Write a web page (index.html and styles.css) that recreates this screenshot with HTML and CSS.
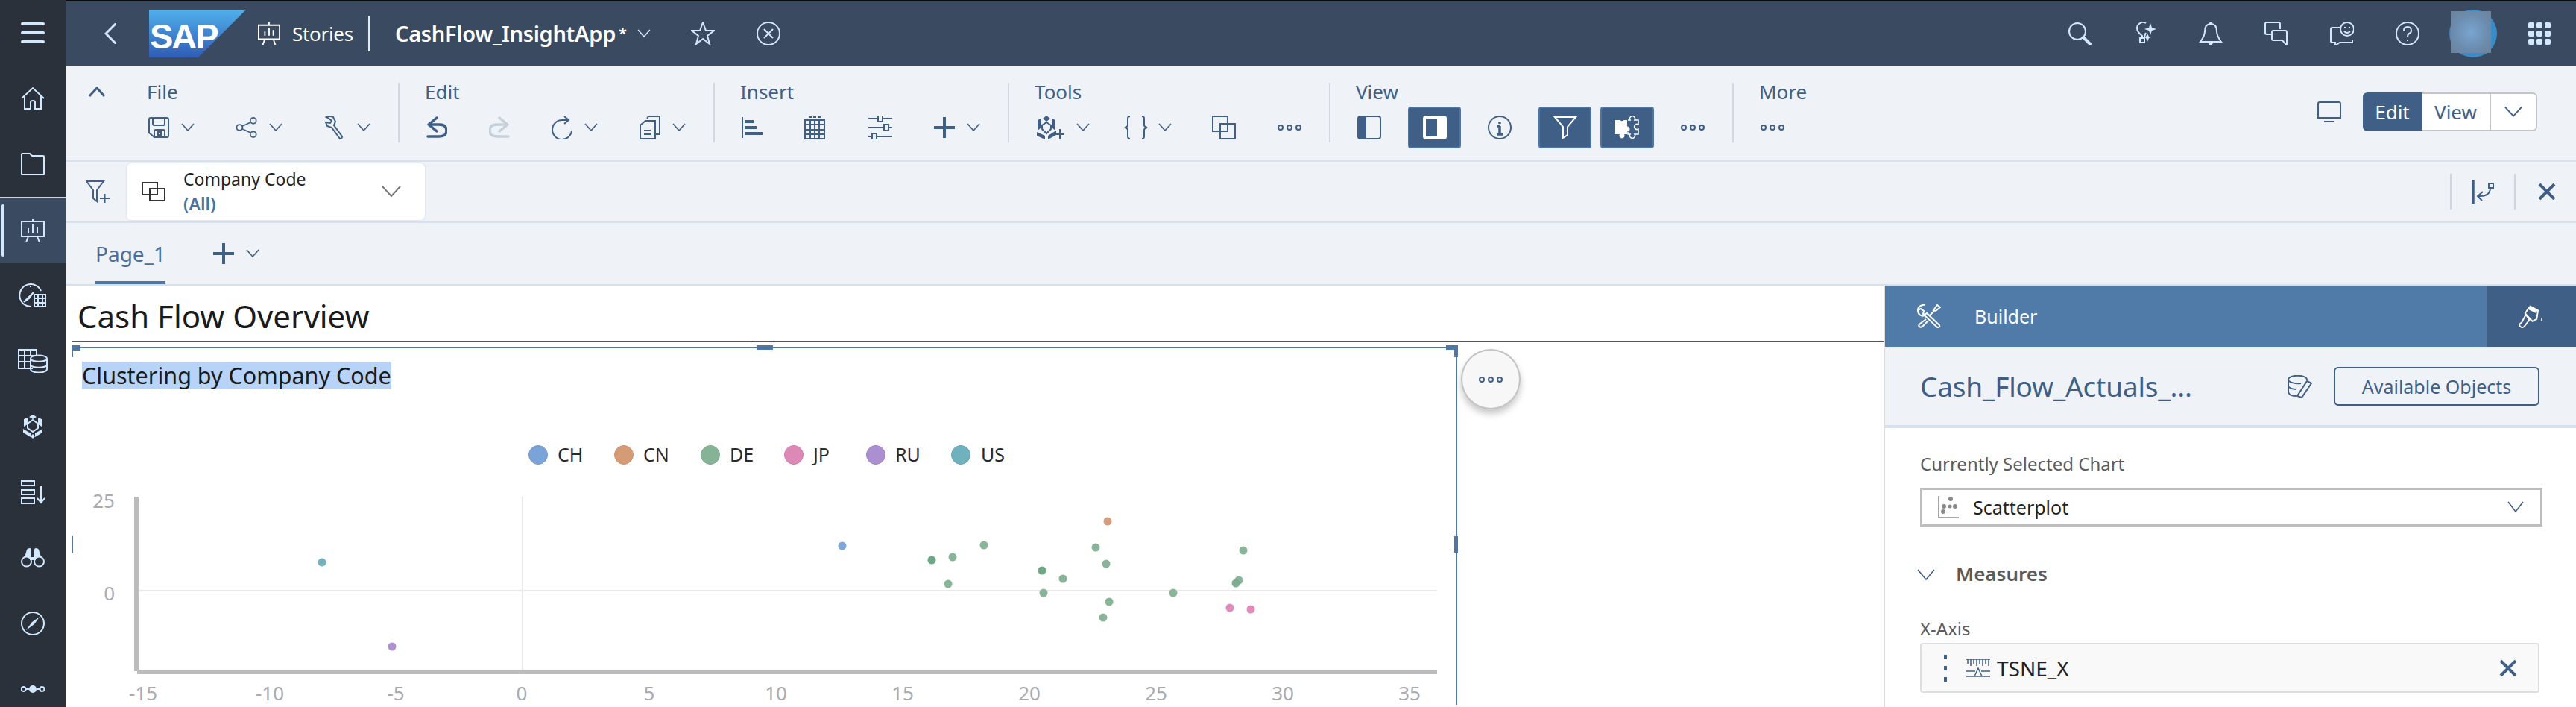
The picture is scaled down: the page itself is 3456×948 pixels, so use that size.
FILE: index.html
```html
<!DOCTYPE html>
<html lang="en">
<head>
<meta charset="utf-8">
<title>CashFlow_InsightApp</title>
<link rel="stylesheet" href="styles.css">
</head>
<body>
<div class="app">

	<nav class="sidebar">
		<div class="side-item"><svg class="ic32" viewBox="0 0 32 32"><path class="fat" d="M2 4H30M2 16H30M2 28H30"/></svg></div>
		<div class="side-item"><svg class="ic32" viewBox="0 0 32 32"><path d="M1 16L16 2L31 16M5 13V30H13V21Q13 19 16 19Q19 19 19 21V30H27V13"/></svg></div>
		<div class="side-item"><svg class="ic32" viewBox="0 0 32 32"><path d="M1 3Q1 2 2 2H12L15 5H30Q31 5 31 6V29Q31 30 30 30H2Q1 30 1 29Z"/></svg></div>
		<div class="side-item active"><svg class="ic32" viewBox="0 0 32 32"><path d="M1 4H31V24H1ZM16 0V4M10 24L7 32M22 24L25 32M10 19V13M16 19V8M22 19V11"/></svg></div>
		<div class="side-item"><svg class="ic36" viewBox="0 0 36 32"><path d="M16 31A15 15 0 1 1 29 10M6 25L19 12L13 20ZM15 3V5"/><path d="M20 15H36V31H20ZM20 20H36M20 26H36M25 15V31M31 15V31"/></svg></div>
		<div class="side-item"><svg class="ic40" viewBox="0 0 40 32"><path d="M20 26H1V1H25V10M1 9H25M1 17H17M9 1V26M17 1V10"/><path d="M17 13C17 7 39 7 39 13V27C39 33 17 33 17 27ZM17 13C17 18 39 18 39 13M17 21C17 26 39 26 39 21"/></svg></div>
		<div class="side-item"><svg class="ic32" viewBox="0 0 32 32"><path class="solid" d="M16 0L21 3L16 6L11 3ZM4 6L9 4V13L4 16ZM28 6L23 4V13L28 16ZM3 19L13 25V30L3 24ZM29 19L19 25V30L29 24ZM16 26L13 29L16 32L19 29Z"/><path d="M16 7L23 12V18L16 23L9 18V12Z"/></svg></div>
		<div class="side-item"><svg class="ic32" viewBox="0 0 32 32"><path d="M1 1H18V7H1ZM1 13H18V19H1ZM1 24H18V31H1ZM27 8V29M22 24L27 30L32 24"/></svg></div>
		<div class="side-item"><svg class="ic32" viewBox="0 0 32 26"><path class="solid" d="M5 12L8 2Q9 0 12 0Q14 0 14 3V12ZM27 12L24 2Q23 0 20 0Q18 0 18 3V12ZM12 12H20V16H12Z"/><circle cx="7.5" cy="18" r="6.5"/><circle cx="24.5" cy="18" r="6.5"/></svg></div>
		<div class="side-item"><svg class="ic32" viewBox="0 0 32 32"><circle cx="16" cy="16" r="15"/><path class="solid" d="M7 25L15 14L25 7L18 17ZM16 2V6"/></svg></div>
		<div class="side-item"><svg class="ic32" viewBox="0 0 32 12"><circle cx="3.5" cy="6" r="3"/><circle cx="28.5" cy="6" r="3"/><circle class="solid" cx="16" cy="6" r="5"/><path d="M7 6H11M21 6H25"/></svg></div>
	</nav>

	<div class="main">
		<header class="shell">
			<svg class="back" viewBox="0 0 16 28"><path d="M15 1L2 14L15 27"/></svg>
			<svg class="sap" viewBox="0 0 130 64">
				<defs><linearGradient id="sapg" x1="0" y1="0" x2="0" y2="1"><stop offset="0" stop-color="#4fb0ec"/><stop offset="1" stop-color="#2f5cb5"/></linearGradient></defs>
				<polygon points="0,0 130,0 66,64 0,64" fill="url(#sapg)"/>
				<text x="1" y="52" class="sap-text">SAP</text>
			</svg>
			<svg class="stories-ic" viewBox="0 0 32 32"><path d="M1 4H31V24H1ZM16 0V4M10 24L7 32M22 24L25 32M10 19V13M16 19V8M22 19V11"/></svg>
			<span class="crumb">Stories</span>
			<span class="crumb-sep"></span>
			<span class="doc">CashFlow_InsightApp</span><span class="dirty">*</span>
			<svg class="chev light doc-chev" viewBox="0 0 18 12"><path d="M1 1L9 10L17 1"/></svg>
			<svg class="ic32 shell-l" viewBox="0 0 32 32"><path d="M16 1L20 12H31L22 19L25 30L16 23L7 30L10 19L1 12H12Z"/></svg>
			<svg class="ic32 shell-l" viewBox="0 0 32 32"><circle cx="16" cy="16" r="15"/><path d="M10 10L22 22M22 10L10 22"/></svg>

			<div class="shell-right">
				<svg class="ic32" viewBox="0 0 32 32"><circle cx="13" cy="13" r="11"/><path class="fat" d="M21 21L30 30"/></svg>
				<svg class="ic32" viewBox="0 0 32 32"><path d="M12 22V19C8 16 5 13 5 9A8 8 0 0 1 17 2M17 15C16 17 15 18 15 22H9V28H15V22"/><path class="solid" d="M23 2L25 8L31 10L25 12L23 18L21 12L15 10L21 8ZM19 16L21 20L24 21L21 22L19 27L17 22L14 21L17 20Z"/></svg>
				<svg class="ic32" viewBox="0 0 32 32"><path d="M16 3C9 3 8 9 8 13C8 19 5 23 2 27H30C27 23 24 19 24 13C24 9 23 3 16 3ZM14 3Q16 0 18 3"/><path class="solid" d="M13 28H19Q18 32 16 32Q14 32 13 28Z"/></svg>
				<svg class="ic32" viewBox="0 0 32 32"><path d="M21 10V3Q21 1 19 1H3Q1 1 1 3V15Q1 17 3 17H10"/><path d="M12 12Q10 12 10 14V23Q10 25 12 25H24L30 32V14Q30 12 28 12Z"/></svg>
				<svg class="ic32" viewBox="0 0 32 32"><path d="M13 8H3Q1 8 1 10V26Q1 28 3 28H7V32L13 28H30V24"/><circle cx="23" cy="10" r="9"/><path d="M19 13Q23 17 27 13M20 7V9M26 7V9"/></svg>
				<svg class="ic32" viewBox="0 0 32 32"><circle cx="16" cy="16" r="15"/><path d="M11 12Q11 7 16 7Q21 7 21 12Q21 15 18 16Q16 17 16 21M16 24V26"/></svg>
				<div class="avatar"><div class="avatar-blur"></div></div>
				<div class="waffle"><i></i><i></i><i></i><i></i><i></i><i></i><i></i><i></i><i></i></div>
			</div>
		</header>

		<section class="ribbon">
			<svg class="collapse" viewBox="0 0 22 14"><path d="M1 13L11 2L21 13"/></svg>

			<div class="group">
				<div class="group-label">File</div>
				<div class="group-row">
					<div class="tool"><svg class="ic28" viewBox="0 0 28 28"><path d="M1 3Q1 1 3 1H25Q27 1 27 3V25Q27 27 25 27H8L1 21ZM6 1V9Q6 11 8 11H20Q22 11 22 9V1M8 27V19Q8 17 10 17H20Q22 17 22 19V27M13 20V24H17V20Z"/></svg><svg class="chev" viewBox="0 0 18 12"><path d="M1 1L9 10L17 1"/></svg></div>
					<div class="tool"><svg class="ic28" viewBox="0 0 32 32"><circle cx="5" cy="16" r="4.5"/><circle cx="26" cy="5.5" r="4.5"/><circle cx="26" cy="26.500" r="4.5"/><path d="M9 14L22 8M9 18L22 24"/></svg><svg class="chev" viewBox="0 0 18 12"><path d="M1 1L9 10L17 1"/></svg></div>
					<div class="tool"><svg class="ic28" viewBox="0 0 28 32"><path d="M3 2Q8 0 12 2L15 8L13 13L24 28Q24 31 21 31L10 16L4 14L2 9L8 10L10 7L5 3Z"/></svg><svg class="chev" viewBox="0 0 18 12"><path d="M1 1L9 10L17 1"/></svg></div>
				</div>
			</div>
			<span class="rib-sep"></span>

			<div class="group">
				<div class="group-label">Edit</div>
				<div class="group-row">
					<div class="tool"><svg class="ic28 undo" viewBox="0 0 28 28"><path d="M14 1L3 10L14 19M4 10H17Q27 10 27 18Q27 26 17 26H2"/></svg></div>
					<div class="tool disabled"><svg class="ic28 undo" viewBox="0 0 28 28"><path d="M14 1L25 10L14 19M24 10H11Q1 10 1 18Q1 26 11 26H26"/></svg></div>
					<div class="tool"><svg class="ic28" viewBox="0 0 28 32"><path d="M17 1L23 6L17 11M23 6H14A13 13 0 1 0 27 20"/></svg><svg class="chev" viewBox="0 0 18 12"><path d="M1 1L9 10L17 1"/></svg></div>
					<div class="tool"><svg class="ic28" viewBox="0 0 28 32"><path d="M10 4L12 1H27V25H22M1 13L8 7H21V31H1ZM6 20H15M6 25H15"/></svg><svg class="chev" viewBox="0 0 18 12"><path d="M1 1L9 10L17 1"/></svg></div>
				</div>
			</div>
			<span class="rib-sep"></span>

			<div class="group">
				<div class="group-label">Insert</div>
				<div class="group-row insert-row">
					<div class="tool"><svg class="ic28" viewBox="0 0 28 28"><path d="M1 0V28"/><path class="solid" d="M4 4H16V8H4ZM4 12H20V16H4ZM4 20H28V24H4Z"/></svg></div>
					<div class="tool"><svg class="ic28" viewBox="0 0 28 32"><path d="M1 6H27V31H1ZM1 12H27M1 19H27M1 25H27M8 6V31M14 6V31M20 6V31M6 2H10M12 2H16M18 2H22"/></svg></div>
					<div class="tool"><svg class="ic32" viewBox="0 0 32 32"><path d="M0 4H12M20 4H32M0 16H20M28 16H32M0 28H4M12 28H32"/><path d="M13 0H19V8H13ZM21 12H27V20H21ZM5 24H11V32H5Z"/></svg></div>
					<div class="tool"><svg class="ic28 thick" viewBox="0 0 28 28"><path d="M0 14H28M14 0V28"/></svg><svg class="chev" viewBox="0 0 18 12"><path d="M1 1L9 10L17 1"/></svg></div>
				</div>
			</div>
			<span class="rib-sep"></span>

			<div class="group">
				<div class="group-label">Tools</div>
				<div class="group-row">
					<div class="tool"><svg class="ic38" viewBox="0 0 38 32"><path class="solid" d="M14 0L19 4L14 8L9 4ZM2 6L7 4V16L2 20ZM26 6L21 4V16L26 20ZM1 22L12 27V32L1 27ZM27 20V26L16 32V27Z"/><path d="M14 9L20 13V18L14 24L8 18V13ZM32 18V32M25 25H38"/></svg><svg class="chev" viewBox="0 0 18 12"><path d="M1 1L9 10L17 1"/></svg></div>
					<div class="tool braces"><svg class="ic32" viewBox="0 0 32 32"><path d="M8 1Q5 1 5 4V13Q5 15 1 16Q5 17 5 19V28Q5 31 8 31M24 1Q27 1 27 4V13Q27 15 31 16Q27 17 27 19V28Q27 31 24 31"/></svg><svg class="chev short" viewBox="0 0 18 12"><path d="M1 1L9 10L17 1"/></svg></div>
					<div class="tool"><svg class="ic32" viewBox="0 0 32 32"><path d="M1 1H21V21H1ZM11 11H31V31H11Z"/></svg></div>
					<div class="tool"><svg class="ic32" viewBox="0 0 32 10"><circle cx="4" cy="5" r="3"/><circle cx="16" cy="5" r="3"/><circle cx="28" cy="5" r="3"/></svg></div>
				</div>
			</div>
			<span class="rib-sep"></span>

			<div class="group">
				<div class="group-label">View</div>
				<div class="group-row view-row">
					<svg class="ic32" viewBox="0 0 32 32"><rect x="1" y="1" width="30" height="30" rx="3"/><path class="solid" d="M3 1H12V31H3Q1 31 1 29V3Q1 1 3 1Z"/></svg>
					<div class="toggle"><svg class="ic32" viewBox="0 0 32 32"><rect class="w-solid" x="1" y="1" width="30" height="30" rx="3"/><rect class="b-solid" x="4" y="4" width="15" height="24"/></svg></div>
					<svg class="ic32" viewBox="0 0 32 32"><circle cx="16" cy="16" r="15"/><path class="thickp" d="M16 14V25M16 8V11M12 25H20M12 14H16"/></svg>
					<div class="toggle"><svg class="ic32 white" viewBox="0 0 32 32"><path d="M2 2H30L19 15V26L13 30V15Z"/></svg></div>
					<div class="toggle tight"><svg class="ic32 white" viewBox="0 0 32 32"><path class="w-fill" d="M0 6H6.500A3 3 0 0 0 11.500 6H16V14.500A3.500 3.500 0 1 1 16 21.500V25H12A3.500 3.500 0 1 1 6 25H0Z"/><path class="w-line" d="M17 6H20A3.500 3.500 0 1 1 26 6H31V12A3.500 3.500 0 1 0 31 18V25H26A3.500 3.500 0 1 1 20 25H17V22"/></svg></div>
					<svg class="ic32" viewBox="0 0 32 10"><circle cx="4" cy="5" r="3"/><circle cx="16" cy="5" r="3"/><circle cx="28" cy="5" r="3"/></svg>
				</div>
			</div>
			<span class="rib-sep"></span>

			<div class="group">
				<div class="group-label">More</div>
				<div class="group-row">
					<div class="tool"><svg class="ic32" viewBox="0 0 32 10"><circle cx="4" cy="5" r="3"/><circle cx="16" cy="5" r="3"/><circle cx="28" cy="5" r="3"/></svg></div>
				</div>
			</div>

			<div class="mode">
				<svg class="ic32" viewBox="0 0 32 28"><path d="M3 1H29Q31 1 31 3V22H1V3Q1 1 3 1ZM9 27H23"/></svg>
				<div class="mode-group">
					<span class="mode-btn on">Edit</span>
					<span class="mode-btn view">View</span>
					<span class="mode-btn drop"><svg class="chev wide" viewBox="0 0 26 16"><path d="M1 1L13 14L25 1"/></svg></span>
				</div>
			</div>
		</section>

		<section class="filterbar">
			<svg class="funnel" viewBox="0 0 32 30"><path d="M1 1H24L15 13V28L10 24V13ZM19 24H32M25.500 18V30"/></svg>
			<div class="filter-card">
				<svg class="linked" viewBox="0 0 32 26"><path d="M1 1H21V17H1ZM11 9H31V25H11Z"/></svg>
				<div class="filter-text">
					<div class="filter-name">Company Code</div>
					<div class="filter-value">(All)</div>
				</div>
				<svg class="chev grey" viewBox="0 0 26 16"><path d="M1 1L13 14L25 1"/></svg>
			</div>
			<div class="filter-tools">
				<span class="filter-tool"><svg class="ic32" viewBox="0 0 32 32"><path class="thickp" d="M3 0V32"/><path d="M24 5V11H30V5ZM26 13Q24 23 10 22M16 16L9 22L15 28"/></svg></span>
				<span class="filter-tool"><svg class="x-ic" viewBox="0 0 24 22"><path d="M2 1L22 21M22 1L2 21"/></svg></span>
			</div>
		</section>

		<section class="tabs">
			<div class="tab">Page_1</div>
			<svg class="ic28 thick tab-plus" viewBox="0 0 28 28"><path d="M0 14H28M14 0V28"/></svg>
			<svg class="chev" viewBox="0 0 18 12"><path d="M1 1L9 10L17 1"/></svg>
		</section>

		<div class="workspace">
			<section class="canvas">
				<h1 class="page-title">Cash Flow Overview</h1>
				<div class="widget">
					<span class="handle h-corner-l"></span>
					<span class="handle h-top"></span>
					<span class="handle h-corner-r"></span>
					<span class="handle h-left"></span>
					<span class="handle h-right"></span>
					<div class="widget-more"><svg class="more-ic" viewBox="0 0 32 10"><circle cx="4" cy="5" r="3"/><circle cx="16" cy="5" r="3"/><circle cx="28" cy="5" r="3"/></svg></div>
					<div class="widget-title"><span class="selected">Clustering by Company Code</span></div>
					<svg class="chart" viewBox="96 530 1859 418">
						<g class="legend">
							<circle cx="722" cy="611" r="12.500" fill="#7aa3d8" stroke="#6c97d3"/><text x="748" y="620">CH</text>
							<circle cx="837" cy="611" r="12.500" fill="#d49b77" stroke="#d58f62"/><text x="863" y="620">CN</text>
							<circle cx="953" cy="611" r="12.500" fill="#86b396" stroke="#78aa8b"/><text x="979" y="620">DE</text>
							<circle cx="1065" cy="611" r="12.500" fill="#dd89b8" stroke="#d874ac"/><text x="1091" y="620">JP</text>
							<circle cx="1175" cy="611" r="12.500" fill="#ab8fd1" stroke="#9f7dcb"/><text x="1201" y="620">RU</text>
							<circle cx="1289" cy="611" r="12.500" fill="#6fb1bd" stroke="#5da7b5"/><text x="1316" y="620">US</text>
						</g>
						<rect x="700" y="667" width="2" height="232" fill="#e8e8e8"/>
						<rect x="186" y="792" width="1742" height="2" fill="#e8e8e8"/>
						<rect x="180" y="667" width="6" height="234" fill="#bcbcbc"/>
						<rect x="184" y="899" width="1744" height="6" fill="#bcbcbc"/>
						<g class="axis">
							<text x="154" y="682" text-anchor="end">25</text>
							<text x="154" y="806" text-anchor="end">0</text>
							<text x="192" y="940" text-anchor="middle">-15</text>
							<text x="362" y="940" text-anchor="middle">-10</text>
							<text x="531" y="940" text-anchor="middle">-5</text>
							<text x="700" y="940" text-anchor="middle">0</text>
							<text x="871" y="940" text-anchor="middle">5</text>
							<text x="1041" y="940" text-anchor="middle">10</text>
							<text x="1211" y="940" text-anchor="middle">15</text>
							<text x="1381" y="940" text-anchor="middle">20</text>
							<text x="1551" y="940" text-anchor="middle">25</text>
							<text x="1721" y="940" text-anchor="middle">30</text>
							<text x="1891" y="940" text-anchor="middle">35</text>
						</g>
						<g class="dots">
							<circle cx="432" cy="755" r="5.500" fill="#6fb1bd"/>
							<circle cx="526" cy="868" r="5.500" fill="#ab8fd1"/>
							<circle cx="1130" cy="733" r="5.500" fill="#7aa3d8"/>
							<circle cx="1486" cy="700" r="5.500" fill="#d49b77"/>
							<circle cx="1650" cy="816" r="5.500" fill="#dd89b8"/>
							<circle cx="1678" cy="818" r="5.500" fill="#dd89b8"/>
							<circle cx="1250" cy="752" r="5.500" fill="#6ba683"/>
							<circle cx="1278" cy="748" r="5.500" fill="#86b396"/>
							<circle cx="1272" cy="784" r="5.500" fill="#86b396"/>
							<circle cx="1320" cy="732" r="5.500" fill="#86b396"/>
							<circle cx="1398" cy="766" r="5.500" fill="#6ba683"/>
							<circle cx="1426" cy="777" r="5.500" fill="#86b396"/>
							<circle cx="1400" cy="796" r="5.500" fill="#86b396"/>
							<circle cx="1470" cy="735" r="5.500" fill="#86b396"/>
							<circle cx="1484" cy="757" r="5.500" fill="#86b396"/>
							<circle cx="1488" cy="808" r="5.500" fill="#86b396"/>
							<circle cx="1480" cy="829" r="5.500" fill="#86b396"/>
							<circle cx="1574" cy="796" r="5.500" fill="#86b396"/>
							<circle cx="1668" cy="739" r="5.500" fill="#86b396"/>
							<circle cx="1662" cy="779" r="5.500" fill="#86b396"/>
							<circle cx="1658" cy="783" r="5.500" fill="#7aac8d"/>
						</g>
					</svg>
				</div>
			</section>

			<aside class="panel">
				<div class="panel-head">
					<div class="panel-tab">
						<svg class="ic32 white" viewBox="0 0 32 32"><path d="M11 1C5 0 1 4 1 8L5 6L9 9L8 13C10 14 12 13 13 12L30 28Q31 31 28 31Q26 31 25 29L10 15C6 17 1 14 1 8M27 1L31 4L25 9L22 8ZM23 9L17 15M12 20L4 26Q1 29 3 30Q5 32 8 29L15 22"/></svg>
						<span>Builder</span>
					</div>
					<div class="panel-tab-alt"><svg class="ic32 white" viewBox="0 0 33 32"><path class="solid" d="M15 1L26 7L23 12L11 6Z"/><path d="M12 6L8 12L18 23L24 20L26 7M9 14L14 21L7 30Q4 33 1 30Q-1 27 3 25Z"/><path class="solid" d="M31 17Q33 22 31 23Q29 22 31 17Z"/></svg></div>
				</div>
				<div class="panel-sub">
					<span class="model-name">Cash_Flow_Actuals_...</span>
					<svg class="db-edit" viewBox="0 0 34 30"><path d="M1 6C1 -1 26 -1 26 6M1 6V22C1 26 6 28 12 28M1 6C1 10 12 12 18 11M1 14C1 17 6 19 12 19M26 8L32 11L19 30L13 28Z"/></svg>
					<span class="avail-btn">Available Objects</span>
				</div>
				<div class="panel-body">
					<div class="field-label">Currently Selected Chart</div>
					<div class="select">
						<svg class="scatter" viewBox="0 0 28 30"><path d="M1 0V29H28"/><circle class="g-solid" cx="17" cy="4" r="3"/><circle class="g-solid" cx="8" cy="14" r="3"/><circle class="g-solid" cx="23" cy="14" r="3"/><circle class="g-solid" cx="16" cy="14" r="2.500"/><circle class="g-solid" cx="7" cy="21" r="3"/></svg>
						<span class="select-text">Scatterplot</span>
						<svg class="chev select-chev" viewBox="0 0 22 16"><path d="M1 1L11 14L21 1"/></svg>
					</div>
					<div class="section-head">
						<svg class="chev sec-chev" viewBox="0 0 24 16"><path d="M1 1L12 14L23 1"/></svg>
						<span>Measures</span>
					</div>
					<div class="field-label axis-label">X-Axis</div>
					<div class="token">
						<div class="grip"><i></i><i></i><i></i></div>
						<svg class="measure" viewBox="0 0 32 26"><path d="M0 1H32M2 1V7M6 1V10M10 1V7M14 1V10M18 1V7M22 1V10M26 1V7M30 1V10M0 17H12M20 17H32M0 24H32M16 13L11 24H21Z"/></svg>
						<span class="token-text">TSNE_X</span>
						<svg class="x-ic token-x" viewBox="0 0 24 22"><path d="M2 1L22 21M22 1L2 21"/></svg>
					</div>
				</div>
			</aside>
		</div>
	</div>
</div>
</body>
</html>
```

FILE: styles.css
```css
*{margin:0;padding:0;box-sizing:border-box;}
html,body{width:3456px;height:948px;overflow:hidden;background:#fff;}
body{font-family:"Noto Sans","Liberation Sans",sans-serif;color:#222;}
svg{display:block;flex:none;fill:none;stroke:currentColor;stroke-width:2;}
.solid{fill:currentColor;stroke:none;}

.app{display:flex;height:948px;border-top:1px solid #0c0c0c;}

/* left nav */
.sidebar{width:88px;flex:none;background:#2a313b;color:#d1e8ff;margin-top:-1px;overflow:hidden;}
.side-item{height:88px;display:flex;align-items:center;justify-content:center;}
.side-item.active{background:#3a4a60;border-top:2px solid #c9d3dd;position:relative;}
.side-item.active::before{content:"";position:absolute;left:2px;top:8px;bottom:8px;width:4px;border-radius:2px;background:#d1e8ff;}
.ic32{width:32px;height:32px;}
.ic36{width:36px;height:32px;}
.ic40{width:40px;height:32px;}
.ic28{width:28px;height:32px;}
.ic38{width:38px;height:32px;}
.fat{stroke-width:4;stroke-linecap:round;}
.thick{stroke-width:4;}
.undo{stroke-width:3.500;stroke-linecap:round;stroke-linejoin:round;}
.thickp{stroke-width:3.500;}
.white{color:#fff;}

.main{flex:1;min-width:0;display:flex;flex-direction:column;}

/* shell header */
.shell{height:87px;background:#3a4a60;color:#d1e8ff;display:flex;align-items:center;padding-left:52px;flex:none;}
.back{width:16px;height:28px;stroke-width:3;margin-right:44px;stroke-linecap:round;}
.sap{width:130px;height:64px;stroke:none;margin-right:16px;}
.sap-text{font-family:"Liberation Sans",sans-serif;font-weight:700;font-size:47px;letter-spacing:-2px;fill:#fff;stroke:none;}
.stories-ic{width:30px;height:32px;color:#fff;margin-right:16px;}
.crumb{font-size:26px;color:#fff;width:84px;letter-spacing:-.3px;}
.crumb-sep{width:2px;height:48px;background:#e4eaf1;margin:0 34px 0 18px;}
.doc{font-size:29px;font-weight:600;color:#fff;letter-spacing:-.3px;}
.dirty{font-size:20px;color:#fff;font-weight:700;margin-left:4px;line-height:20px;}
.doc-chev{margin-left:14px;margin-right:54px;}
.shell-l{margin-right:56px;}
.shell-right{margin-left:auto;display:flex;align-items:center;gap:56px;padding-right:36px;}
.avatar{width:64px;height:64px;border-radius:50%;background:#3b8bc9;margin:0 -14px 0 -16px;position:relative;}
.avatar-blur{position:absolute;left:2px;top:2px;width:54px;height:56px;background:radial-gradient(circle,#79a5d0 0%,#6c8cae 60%,#6d8299 100%);}
.waffle{width:28px;display:grid;grid-template-columns:repeat(3,8px);gap:3px;}
.waffle i{height:8px;background:#d1e8ff;border-radius:2px;}

.chev{width:18px;height:12px;stroke-width:1.600;color:#3f5f86;}
.chev.light{color:#d1e8ff;}
.chev.wide{width:24px;height:16px;stroke-width:2;}
.chev.grey{width:26px;height:16px;stroke-width:2;color:#777;}

/* ribbon */
.ribbon{height:129px;background:#eff3f8;border-bottom:2px solid #d5e1ef;display:flex;align-items:flex-start;padding-top:23px;color:#3f5f86;flex:none;}
.collapse{width:22px;height:14px;stroke-width:3;margin:5px 58px 0 31px;}
.group{display:flex;flex-direction:column;}
.group-label{height:24px;line-height:24px;font-size:26px;color:#3f5f86;margin-left:-2px;}
.group-row{display:flex;align-items:center;height:56px;margin-top:8px;gap:56px;}
.tool{display:flex;align-items:center;gap:16px;}
.tool.disabled{color:#c7d1dc;}
.tool.braces{margin-left:-10px;margin-right:-2px;}
.tool.braces .chev{margin-left:-2px;}
.insert-row .tool:nth-child(3){margin-left:2px;}
.rib-sep{width:2px;height:80px;background:#d3d8de;margin:0 36px 0 37px;flex:none;}
.view-row{gap:36px;}
.toggle{width:71px;height:56px;background:#3f5f86;border-radius:4px;border:2px solid #4c76a6;display:flex;align-items:center;justify-content:center;}
.toggle.tight{margin-left:-24px;width:72px;}
.w-solid{fill:#fff;stroke:#fff;}
.b-solid{fill:#3f5f86;stroke:none;}
.w-fill{fill:#fff;stroke:none;}
.w-line{stroke-width:1.500;}
.mode{margin-left:auto;display:flex;align-items:center;height:52px;margin-top:13px;gap:29px;padding-right:52px;}
.mode-group{display:flex;height:52px;}
.mode-btn{display:flex;align-items:center;justify-content:center;font-size:26px;height:52px;background:#fff;color:#3f5f86;border:2px solid #c4c4c4;}
.mode-btn.on{width:79px;background:#3f5f86;border-color:#3f5f86;color:#fff;border-radius:6px 0 0 6px;}
.mode-btn.view{width:91px;border-left:0;border-right:0;}
.mode-btn.drop{width:64px;border-radius:0 6px 6px 0;}

/* filter bar */
.filterbar{height:82px;background:#eff3f8;border-bottom:2px solid #d5e1ef;display:flex;align-items:center;color:#3f5f86;padding-left:27px;flex:none;}
.funnel{width:32px;height:30px;margin-right:23px;}
.filter-card{width:400px;height:76px;background:#fff;border-radius:6px;box-shadow:0 0 3px #cdd6e0;display:flex;align-items:center;padding:0 32px 0 20px;color:#333;}
.linked{width:32px;height:26px;margin-right:24px;}
.filter-text{flex:1;}
.filter-name{font-size:23px;line-height:33px;color:#222;}
.filter-value{font-size:23px;line-height:33px;font-weight:600;color:#4a73a3;}
.filter-tools{margin-left:auto;display:flex;align-items:center;padding-right:20px;}
.filter-tool{width:86px;height:48px;border-left:2px solid #d0d5db;display:flex;align-items:center;justify-content:center;}
.filter-tool:last-child{width:63px;justify-content:flex-start;padding-left:30px;}
.x-ic{width:24px;height:22px;stroke-width:4;color:#3f5f86;}

/* page tabs */
.tabs{height:84px;background:#eff3f8;border-bottom:2px solid #d5e1ef;display:flex;align-items:center;padding-left:40px;color:#3f5f86;flex:none;}
.tab{font-size:28px;color:#4a6f9b;height:82px;line-height:82px;border-bottom:4px solid #4f77a6;width:94px;margin-right:64px;}
.tab-plus{margin-right:16px;}

/* canvas */
.workspace{flex:1;display:flex;min-height:0;}
.canvas{flex:1;min-width:0;padding-left:8px;}
.page-title{height:76px;line-height:82px;font-size:42px;font-weight:400;color:#1a1a1a;padding-left:8px;border-bottom:2px solid #555;}
.widget{width:1859px;margin-top:6px;border-top:2px solid #4f77a6;border-right:2px solid #4f77a6;position:relative;height:480px;}
.handle{position:absolute;background:#4f77a6;}
.h-corner-l{left:0;top:-4px;width:12px;height:7px;}
.h-corner-l::after{content:"";position:absolute;left:0;top:0;width:2px;height:16px;background:#4f77a6;}
.h-top{left:919px;top:-4px;width:22px;height:6px;}
.h-corner-r{right:-3px;top:-4px;width:16px;height:6px;}
.h-corner-r::after{content:"";position:absolute;right:0;top:0;width:5px;height:16px;background:#4f77a6;}
.h-left{left:0;top:252px;width:2px;height:22px;}
.h-right{right:-3px;top:252px;width:5px;height:22px;}
.widget-more{position:absolute;left:1864px;top:1px;width:80px;height:81px;border-radius:50%;background:#f7f7f7;border:2px solid #c4c4c4;box-shadow:0 6px 10px rgba(0,0,0,.22);display:flex;align-items:center;justify-content:center;color:#3f5f86;}
.more-ic{width:32px;height:10px;stroke-width:2;}
.widget-title{height:62px;padding:18px 0 0 14px;font-size:30.500px;line-height:37px;color:#1a1a1a;}
.selected{background:#b7d4f8;display:inline-block;height:37px;}
.chart{width:1859px;height:418px;stroke:none;}
.chart circle{stroke-width:1;}
.legend text{font-size:25px;fill:#2a2a2a;stroke:none;}
.axis text{font-size:26px;fill:#a9abb0;stroke:none;}
.dots circle{opacity:.98;stroke:none;}

/* builder panel */
.panel{width:929px;flex:none;border-left:2px solid #dcdcdc;}
.panel-head{height:82px;display:flex;color:#fff;}
.panel-tab{flex:1;background:#507aa8;display:flex;align-items:center;padding-left:43px;font-size:25px;gap:45px;}
.panel-tab-alt{width:120px;background:#3f5f86;display:flex;align-items:center;justify-content:center;}
.panel-sub{height:109px;background:#eff3f8;border-bottom:4px solid #d5e1ef;display:flex;align-items:center;padding:0 47px;color:#3f5f86;}
.model-name{font-size:37px;width:493px;letter-spacing:-.2px;}
.db-edit{width:34px;height:30px;margin-right:28px;}
.avail-btn{width:276px;height:52px;border:2px solid #3f5f86;border-radius:6px;display:flex;align-items:center;justify-content:center;font-size:25px;background:#eff3f8;}
.panel-body{padding:30px 47px 0;}
.field-label{font-size:24px;line-height:36px;color:#5b5b5b;}
.select{width:835px;height:52px;margin-top:14px;border:3px solid #bdbdbd;display:flex;align-items:center;padding:0 22px 0 21px;background:#fff;}
.scatter{width:28px;height:30px;stroke:#8a8a8a;stroke-width:1.500;margin-right:19px;}
.g-solid{fill:#8a8a8a;stroke:none;}
.select-text{font-size:25px;color:#222;flex:1;}
.select-chev{width:22px;height:16px;}
.section-head{display:flex;align-items:center;height:40px;margin-top:43px;font-size:26px;font-weight:600;color:#5b5b5b;}
.sec-chev{width:24px;height:16px;margin:4px 28px 0 -4px;}
.axis-label{margin-top:36px;}
.token{width:831px;height:67px;margin-top:1px;background:#f9f9f9;border:2px solid #dedede;border-radius:4px;display:flex;align-items:center;padding-left:30px;}
.grip{width:4px;display:flex;flex-direction:column;gap:9px;margin-right:26px;}
.grip i{height:6px;background:#3f5f86;}
.measure{width:32px;height:26px;color:#3f5f86;stroke-width:1.500;margin-right:9px;}
.token-text{font-size:28px;color:#222;flex:1;}
.token-x{margin-right:28px;}
```
